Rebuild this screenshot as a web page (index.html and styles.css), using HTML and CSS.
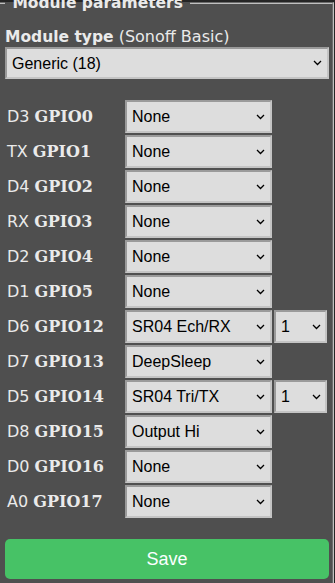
FILE: index.html
```html
<!DOCTYPE html>
<html>
<head>
<meta charset="utf-8">
<link rel="stylesheet" href="styles.css">
</head>
<body>
<div class="page">
  <fieldset class="box">
    <legend class="legend">&nbsp;Module parameters&nbsp;</legend>
    <div class="mtype"><b class="mtype-b">Module type</b> (Sonoff Basic)</div>
    <div class="sw"><select class="sel sel-full"><option>Generic (18)</option></select><svg class="chev" width="9" height="6" viewBox="0 0 9 6"><path d="M1 1 L4.5 4.5 L8 1" fill="none" stroke="#000" stroke-width="1.3"/></svg></div>
    <table class="gpio">
      <tr><td class="lbl">D3 <b class="g">GPIO0</b></td><td class="c2"><div class="sw"><select class="sel sel-main"><option>None</option></select><svg class="chev" width="9" height="6" viewBox="0 0 9 6"><path d="M1 1 L4.5 4.5 L8 1" fill="none" stroke="#000" stroke-width="1.3"/></svg></div></td><td class="c3"></td></tr>
      <tr><td class="lbl">TX <b class="g">GPIO1</b></td><td class="c2"><div class="sw"><select class="sel sel-main"><option>None</option></select><svg class="chev" width="9" height="6" viewBox="0 0 9 6"><path d="M1 1 L4.5 4.5 L8 1" fill="none" stroke="#000" stroke-width="1.3"/></svg></div></td><td class="c3"></td></tr>
      <tr><td class="lbl">D4 <b class="g">GPIO2</b></td><td class="c2"><div class="sw"><select class="sel sel-main"><option>None</option></select><svg class="chev" width="9" height="6" viewBox="0 0 9 6"><path d="M1 1 L4.5 4.5 L8 1" fill="none" stroke="#000" stroke-width="1.3"/></svg></div></td><td class="c3"></td></tr>
      <tr><td class="lbl">RX <b class="g">GPIO3</b></td><td class="c2"><div class="sw"><select class="sel sel-main"><option>None</option></select><svg class="chev" width="9" height="6" viewBox="0 0 9 6"><path d="M1 1 L4.5 4.5 L8 1" fill="none" stroke="#000" stroke-width="1.3"/></svg></div></td><td class="c3"></td></tr>
      <tr><td class="lbl">D2 <b class="g">GPIO4</b></td><td class="c2"><div class="sw"><select class="sel sel-main"><option>None</option></select><svg class="chev" width="9" height="6" viewBox="0 0 9 6"><path d="M1 1 L4.5 4.5 L8 1" fill="none" stroke="#000" stroke-width="1.3"/></svg></div></td><td class="c3"></td></tr>
      <tr><td class="lbl">D1 <b class="g">GPIO5</b></td><td class="c2"><div class="sw"><select class="sel sel-main"><option>None</option></select><svg class="chev" width="9" height="6" viewBox="0 0 9 6"><path d="M1 1 L4.5 4.5 L8 1" fill="none" stroke="#000" stroke-width="1.3"/></svg></div></td><td class="c3"></td></tr>
      <tr><td class="lbl">D6 <b class="g">GPIO12</b></td><td class="c2"><div class="sw"><select class="sel sel-main"><option>SR04 Ech/RX</option></select><svg class="chev" width="9" height="6" viewBox="0 0 9 6"><path d="M1 1 L4.5 4.5 L8 1" fill="none" stroke="#000" stroke-width="1.3"/></svg></div></td><td class="c3"><div class="sw"><select class="sel sel-idx"><option>1</option></select><svg class="chev chev-idx" width="9" height="6" viewBox="0 0 9 6"><path d="M1 1 L4.5 4.5 L8 1" fill="none" stroke="#000" stroke-width="1.3"/></svg></div></td></tr>
      <tr><td class="lbl">D7 <b class="g">GPIO13</b></td><td class="c2"><div class="sw"><select class="sel sel-main"><option>DeepSleep</option></select><svg class="chev" width="9" height="6" viewBox="0 0 9 6"><path d="M1 1 L4.5 4.5 L8 1" fill="none" stroke="#000" stroke-width="1.3"/></svg></div></td><td class="c3"></td></tr>
      <tr><td class="lbl">D5 <b class="g">GPIO14</b></td><td class="c2"><div class="sw"><select class="sel sel-main"><option>SR04 Tri/TX</option></select><svg class="chev" width="9" height="6" viewBox="0 0 9 6"><path d="M1 1 L4.5 4.5 L8 1" fill="none" stroke="#000" stroke-width="1.3"/></svg></div></td><td class="c3"><div class="sw"><select class="sel sel-idx"><option>1</option></select><svg class="chev chev-idx" width="9" height="6" viewBox="0 0 9 6"><path d="M1 1 L4.5 4.5 L8 1" fill="none" stroke="#000" stroke-width="1.3"/></svg></div></td></tr>
      <tr><td class="lbl">D8 <b class="g">GPIO15</b></td><td class="c2"><div class="sw"><select class="sel sel-main"><option>Output Hi</option></select><svg class="chev" width="9" height="6" viewBox="0 0 9 6"><path d="M1 1 L4.5 4.5 L8 1" fill="none" stroke="#000" stroke-width="1.3"/></svg></div></td><td class="c3"></td></tr>
      <tr><td class="lbl">D0 <b class="g">GPIO16</b></td><td class="c2"><div class="sw"><select class="sel sel-main"><option>None</option></select><svg class="chev" width="9" height="6" viewBox="0 0 9 6"><path d="M1 1 L4.5 4.5 L8 1" fill="none" stroke="#000" stroke-width="1.3"/></svg></div></td><td class="c3"></td></tr>
      <tr><td class="lbl">A0 <b class="g">GPIO17</b></td><td class="c2"><div class="sw"><select class="sel sel-main"><option>None</option></select><svg class="chev" width="9" height="6" viewBox="0 0 9 6"><path d="M1 1 L4.5 4.5 L8 1" fill="none" stroke="#000" stroke-width="1.3"/></svg></div></td><td class="c3"></td></tr>
    </table>
    <button class="save">Save</button>
  </fieldset>
</div>
</body>
</html>
```
FILE: styles.css
```css
html, body {
  margin: 0;
  padding: 0;
  background: #252525;
  overflow: hidden;
}
.page {
  width: 335px;
  height: 583px;
  overflow: hidden;
  font-family: "DejaVu Sans", Verdana, sans-serif;
  font-size: 16px;
  color: #eaeaea;
}
.box {
  margin: -6px 1px 0 -3px;
  padding: 0 3px 5px 6px;
  border: 2px groove #c0c0c0;
  background: #4f4f4f;
  min-height: 600px;
}
.legend {
  padding: 0 2px;
  font-weight: bold;
  font-size: 15.5px;
  line-height: 18px;
}
.mtype {
  margin-top: 15px;
  line-height: 19px;
}
.mtype-b {
  font-size: 15.5px;
}
.sw {
  position: relative;
}
.chev {
  position: absolute;
  right: 7px;
  top: 50%;
  margin-top: -3px;
  pointer-events: none;
}
.chev-idx {
  right: 6px;
}
.sel {
  -webkit-appearance: none;
  appearance: none;
  box-sizing: border-box;
  display: block;
  height: 33px;
  padding: 0 5px;
  margin: 0;
  background-color: #dddddd;
  color: #000;
  border: 2px solid;
  border-color: #9a9a9a #c4c4c4 #c4c4c4 #9a9a9a;
  border-radius: 0;
  font-family: "Liberation Sans", Arial, sans-serif;
  font-size: 16px;
}
.sel-full {
  width: 100%;
  height: 32px;
}
.sel-main {
  width: 147px;
}
.sel-idx {
  width: 53px;
}
.gpio {
  margin-top: 19px;
  border-spacing: 2px;
  border-collapse: separate;
  margin-left: 0;
}
.gpio td {
  padding: 0;
  vertical-align: middle;
}
.lbl {
  width: 116px;
  white-space: nowrap;
  line-height: 19px;
}
.g {
  font-family: "DejaVu Serif", Georgia, serif;
  font-weight: bold;
}
.c2 {
  width: 147px;
}
.c3 {
  width: 53px;
}
.save {
  display: block;
  width: 100%;
  height: 40px;
  margin-top: 19px;
  border: 0;
  border-radius: 5px;
  background: #47c266;
  color: #faffff;
  font-family: "Liberation Sans", Arial, sans-serif;
  font-size: 18px;
  line-height: 40px;
  padding: 0;
}
```
